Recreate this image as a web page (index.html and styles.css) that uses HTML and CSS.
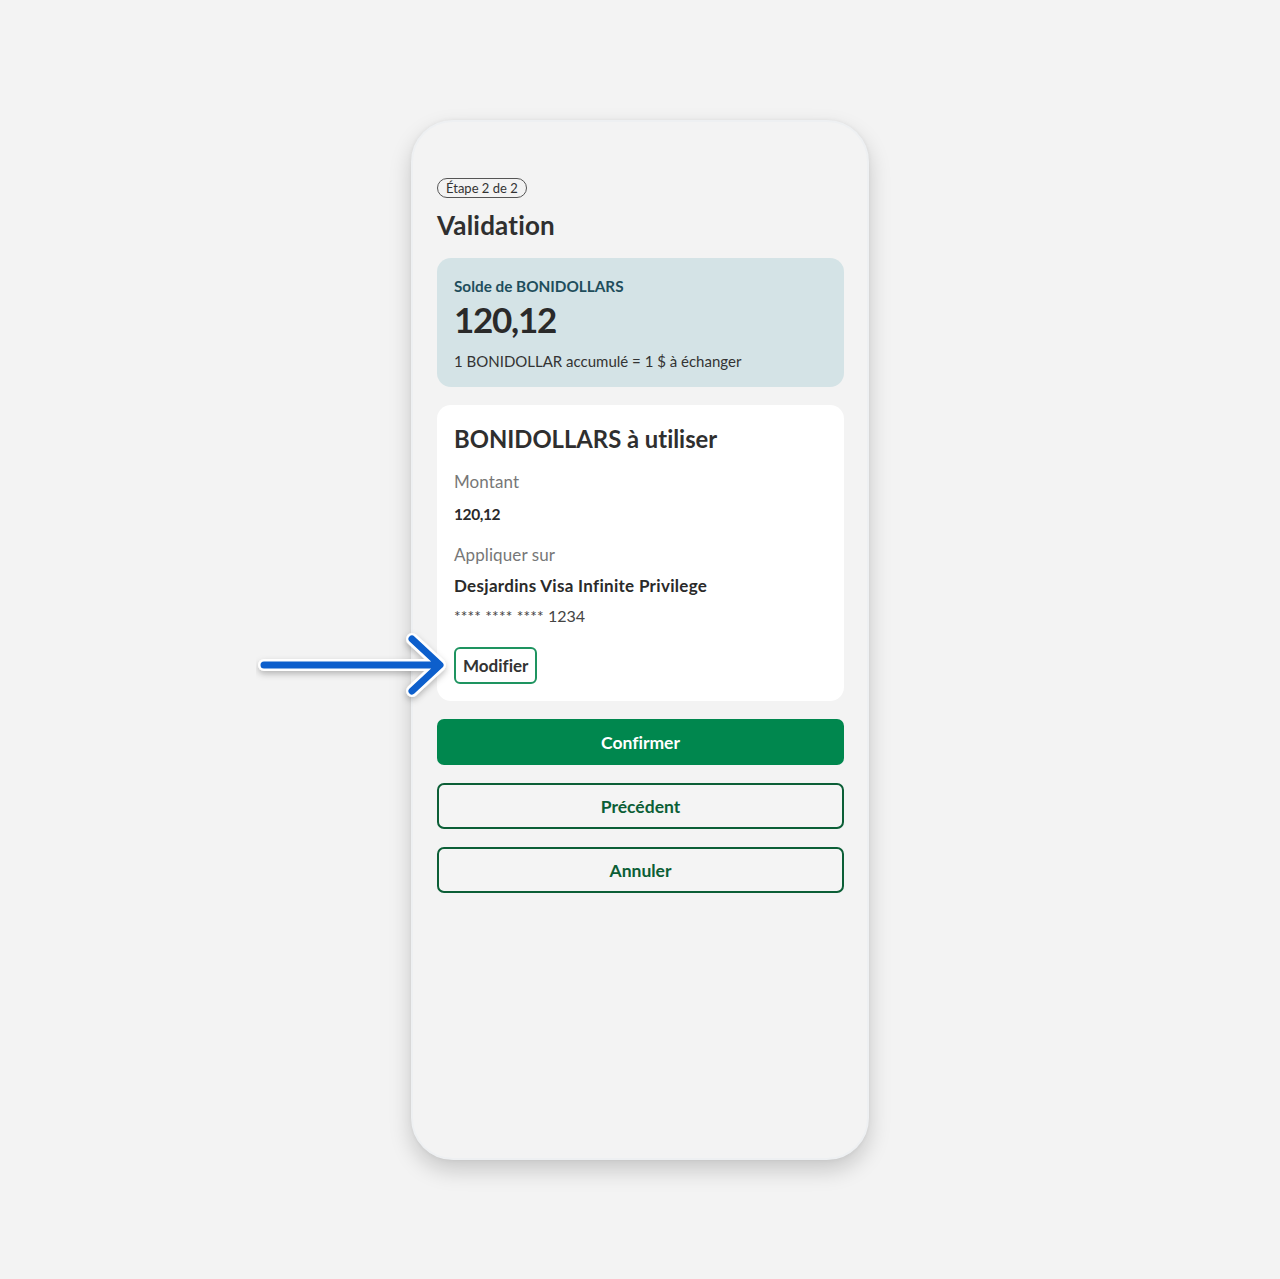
FILE: index.html
```html
<!DOCTYPE html>
<html lang="fr">
<head>
    <meta charset="UTF-8">
    <meta name="viewport" content="width=device-width, initial-scale=1.0">
    <title>Validation - BONIDOLLARS</title>
    <link rel="stylesheet" href="styles.css">
</head>
<body>
    <div class="stage">
        <div class="phone">
            <span class="step">Étape 2 de 2</span>
            <h1 class="title">Validation</h1>

            <div class="balance">
                <div class="balance-label">Solde de BONIDOLLARS</div>
                <div class="balance-amount">120,12</div>
                <div class="balance-note">1 BONIDOLLAR accumulé = 1 $ à échanger</div>
            </div>

            <div class="card">
                <h2 class="card-title">BONIDOLLARS à utiliser</h2>
                <div class="field-label">Montant</div>
                <div class="field-value amount">120,12</div>
                <div class="field-label">Appliquer sur</div>
                <div class="field-value account">Desjardins Visa Infinite Privilege</div>
                <div class="card-number"><span class="stars">**** **** ****</span> 1234</div>
                <button class="btn-small">Modifier</button>
            </div>

            <div class="actions">
                <button class="btn btn-primary">Confirmer</button>
                <button class="btn btn-outline">Précédent</button>
                <button class="btn btn-outline">Annuler</button>
            </div>
        </div>

        <!-- pointer arrow drawn over the page -->
        <svg class="pointer" width="200" height="80" viewBox="0 0 200 80">
            <defs>
                <filter id="shadow" x="-20%" y="-50%" width="140%" height="200%">
                    <feDropShadow dx="0" dy="3" stdDeviation="3" flood-color="#000" flood-opacity="0.25"/>
                </filter>
            </defs>
            <g filter="url(#shadow)" fill="none" stroke-linecap="round" stroke-linejoin="round">
                <path d="M8 36 H183 M156 10 L184 36 L156 62" stroke="#fff" stroke-width="12"/>
                <path d="M8 36 H183 M156 10 L184 36 L156 62" stroke="#0a5fcc" stroke-width="7"/>
            </g>
        </svg>
    </div>
</body>
</html>
```

FILE: styles.css
```css
body {
    margin: 0;
    padding: 0;
    background-color: #f3f3f3;
    font-family: 'Lato', 'Open Sans', sans-serif;
    font-variant-ligatures: none;
    color: #333;
}
.stage {
    position: relative;
    width: 1280px;
    height: 1279px;
    padding-top: 120px;
    box-sizing: border-box;
}
.phone {
    width: 458px;
    height: 1040px;
    margin: 0 auto;
    box-sizing: border-box;
    padding: 56px 23px 0 24px;
    background-color: #f3f3f3;
    border: 2px solid #eef0f2;
    border-radius: 42px;
    box-shadow: 0 10px 22px rgba(0, 0, 0, 0.18), 0 0 4px rgba(0, 0, 0, 0.06);
    display: flex;
    flex-direction: column;
    align-items: flex-start;
}
.step {
    display: inline-block;
    font-size: 13px;
    line-height: 18px;
    padding: 0 8px;
    border: 1px solid #555;
    border-radius: 10px;
    color: #333;
}
.title {
    font-size: 26px;
    line-height: 30px;
    font-weight: 700;
    margin: 12px 0 18px;
    color: #2f2f2f;
    letter-spacing: 0.2px;
}
.balance {
    align-self: stretch;
    background-color: #d4e3e6;
    border-radius: 14px;
    padding: 18px 17px 16px;
}
.balance-label {
    font-size: 15.3px;
    line-height: 20px;
    font-weight: 700;
    color: #1f4e5c;
}
.balance-amount {
    font-size: 35px;
    line-height: 40px;
    font-weight: 700;
    letter-spacing: -1.3px;
    margin: 3px 0 12px;
    color: #2a2a2a;
}
.balance-note {
    font-size: 15px;
    line-height: 20px;
    color: #333;
}
.card {
    align-self: stretch;
    margin-top: 18px;
    background-color: #fff;
    border-radius: 14px;
    padding: 19px 17px 17px;
    display: flex;
    flex-direction: column;
    align-items: flex-start;
}
.card-title {
    font-size: 23.8px;
    line-height: 30px;
    font-weight: 700;
    margin: 0 0 17px;
    color: #2f2f2f;
}
.field-label {
    font-size: 17px;
    line-height: 22px;
    color: #777;
    letter-spacing: 0.1px;
}
.field-value {
    font-size: 16px;
    line-height: 22px;
    font-weight: 700;
    color: #2a2a2a;
}
.amount {
    font-size: 15.5px;
    letter-spacing: -0.4px;
    margin: 10px 0 19px;
}
.account {
    font-size: 17px;
    letter-spacing: 0.3px;
    margin: 9px 0 8px;
}
.card-number {
    font-size: 16px;
    line-height: 22px;
    color: #444;
    margin-bottom: 20px;
}
.stars {
    font-size: 15.5px;
    letter-spacing: 0.2px;
}
.btn-small {
    font-family: inherit;
    font-size: 17px;
    font-weight: 700;
    color: #333;
    background-color: #fff;
    border: 2px solid #1e9460;
    border-radius: 6px;
    padding: 0 7px;
    height: 37px;
    font-variant-ligatures: none;
}
.actions {
    align-self: stretch;
    margin-top: 18px;
    display: flex;
    flex-direction: column;
    gap: 18px;
}
.btn {
    font-family: inherit;
    font-size: 17.5px;
    font-weight: 700;
    height: 46px;
    border-radius: 7px;
    cursor: pointer;
    font-variant-ligatures: none;
}
.btn-primary {
    color: #fff;
    background-color: #00874e;
    border: none;
}
.btn-outline {
    color: #0b5e36;
    background-color: #f4f4f4;
    border: 2px solid #0b5e36;
}
.pointer {
    position: absolute;
    left: 256px;
    top: 629px;
}
```
